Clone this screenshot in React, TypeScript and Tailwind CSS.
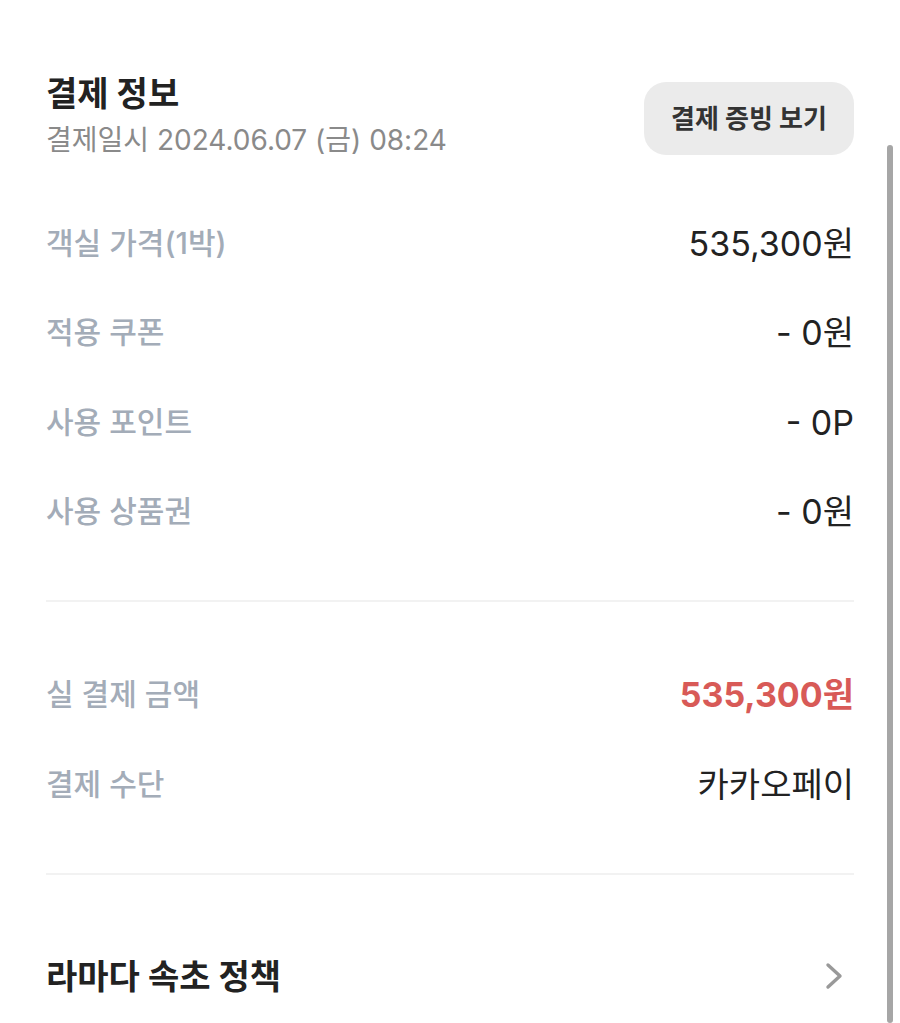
const rows = [
  { label: "객실 가격(1박)", value: "535,300원" },
  { label: "적용 쿠폰", value: "- 0원" },
  { label: "사용 포인트", value: "- 0P" },
  { label: "사용 상품권", value: "- 0원" },
];

export default function App() {
  return (
    <div
      className="relative w-[900px] h-[1023px] overflow-hidden bg-white text-[#222]"
      style={{ fontFamily: 'Inter, "Noto Sans CJK KR", sans-serif' }}
    >
      <div className="px-[46px] pt-[70px]">
        {/* Header */}
        <div className="flex items-start justify-between">
          <div>
            <h2 className="text-[34px] font-bold leading-[48px] text-[#222]">결제 정보</h2>
            <p className="mt-[2px] text-[28px] leading-[40px] text-[#8a8a8a]">결제일시 2024.06.07 (금) 08:24</p>
          </div>
          <button className="mt-[12px] h-[73px] w-[210px] rounded-[22px] bg-[#ebebeb] text-[26px] font-bold text-[#333]">
            결제 증빙 보기
          </button>
        </div>

        {/* Price rows */}
        <div className="mt-[39px] flex flex-col">
          {rows.map((r) => (
            <div key={r.label} className="flex h-[89.3px] items-center justify-between">
              <span className="text-[30px] font-medium text-[#a3acb8]">{r.label}</span>
              <span className="text-[34px] text-[#222]">{r.value}</span>
            </div>
          ))}
        </div>

        <div className="mt-[44px] h-[2px] bg-[#f2f2f2]" />

        <div className="mt-[48px] flex flex-col">
          <div className="flex h-[89.3px] items-center justify-between">
            <span className="text-[30px] font-medium text-[#a3acb8]">실 결제 금액</span>
            <span className="text-[34px] font-bold text-[#d85a57]">535,300원</span>
          </div>
          <div className="flex h-[89.3px] items-center justify-between">
            <span className="text-[30px] font-medium text-[#a3acb8]">결제 수단</span>
            <span className="text-[34px] text-[#222]">카카오페이</span>
          </div>
        </div>

        <div className="mt-[44px] h-[2px] bg-[#f2f2f2]" />

        <div className="mt-[76px] flex items-center justify-between">
          <span className="text-[34px] font-bold text-[#222]">라마다 속초 정책</span>
          <svg width="20" height="28" viewBox="0 0 20 28" className="mr-[10px]" fill="none">
            <polyline points="4,3 16,14 4,25" stroke="#999999" strokeWidth="3.4" strokeLinecap="round" strokeLinejoin="round" />
          </svg>
        </div>
      </div>

      {/* scroll indicator */}
      <div className="absolute right-[7px] top-[145px] bottom-0 w-[6px] rounded-full bg-[#a6a6a6]" />
    </div>
  );
}
